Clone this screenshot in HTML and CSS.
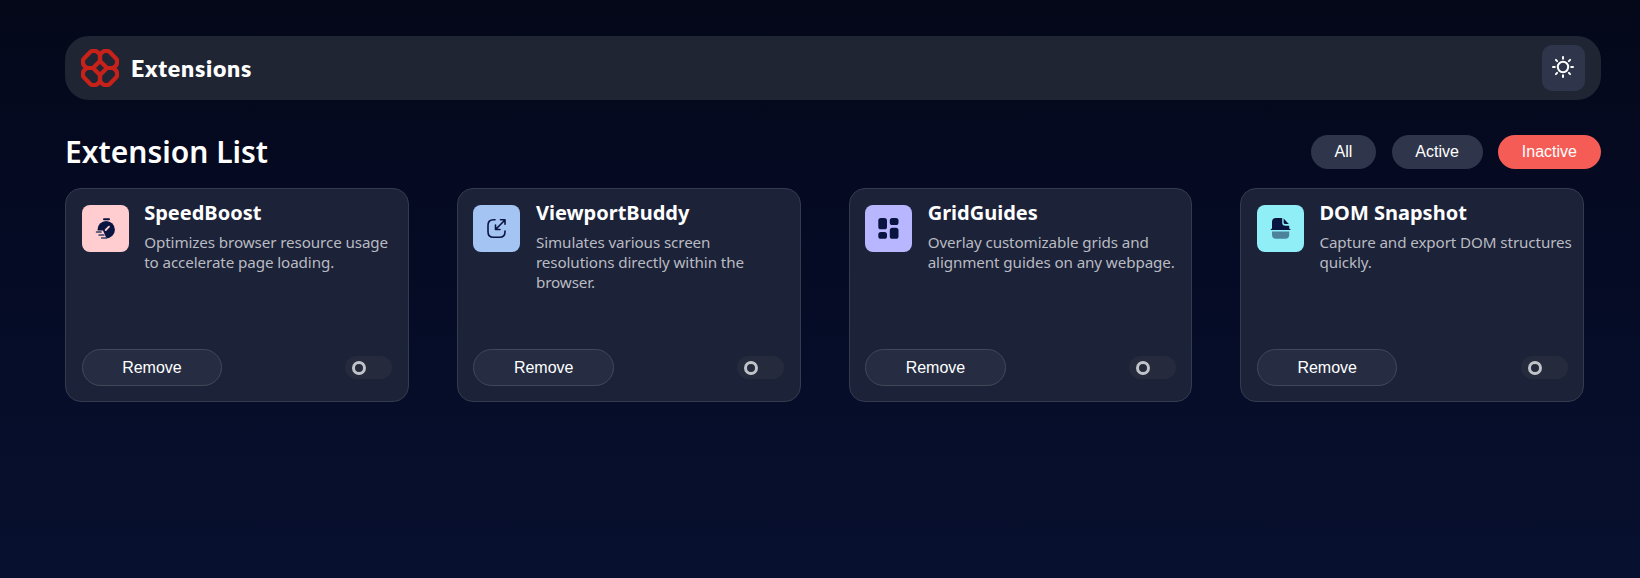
FILE: index.html
```
<!DOCTYPE html>
<html lang="en">
<head>
<meta charset="utf-8">
<title>Extensions</title>
<link rel="stylesheet" href="styles.css">
</head>
<body>
<main class="page">
  <header class="topbar">
    <div class="brand">
      <svg class="brand-mark" viewBox="0 0 38 38" fill="none" stroke="#c7221a" stroke-width="4.200" stroke-linejoin="round">
        <path id="petal" d="M2 11.500Q2 10.500 2.800 9.700L9.300 3Q10.300 2 11.700 2H14Q15.400 2 16.400 3L18 4.600Q19 5.600 19 7V12L12 19H7Q5.600 19 4.600 18L3 16.400Q2 15.400 2 14Z"/>
        <use href="#petal" transform="matrix(-1 0 0 1 38 0)"/>
        <use href="#petal" transform="matrix(1 0 0 -1 0 38)"/>
        <use href="#petal" transform="matrix(-1 0 0 -1 38 38)"/>
      </svg>
      <span class="brand-name">Extensions</span>
    </div>
    <button class="theme">
      <svg width="22" height="22" viewBox="0 0 22 22" fill="none" stroke="#fff" stroke-width="2" stroke-linecap="round"><circle cx="11" cy="11" r="5.200"/><path d="M11 1v1.800M11 19.200v1.800M1 11h1.800M19.200 11h1.800M3.900 3.900l1.200 1.200M16.900 16.900l1.200 1.200M18.100 3.900l-1.200 1.200M5.100 16.900l-1.200 1.200"/></svg>
    </button>
  </header>
  <div class="heading">
    <h1>Extension List</h1>
    <nav class="filters">
      <button class="filter">All</button>
      <button class="filter">Active</button>
      <button class="filter selected">Inactive</button>
    </nav>
  </div>
  <section class="grid">
    <article class="card">
      <div class="info">
        <div class="icon pink"><svg width="47" height="47" viewBox="0 0 47 47" fill="none"><circle cx="24.200" cy="24.700" r="8.700" fill="#091540"/><path d="M22 14.300h5" stroke="#091540" stroke-width="2" stroke-linecap="round"/><path d="M23.700 25l3.300-3.300" stroke="#ffcdd0" stroke-width="1.800" stroke-linecap="round"/><path d="M13 25.500h8l4 9-8 1-4-5z" fill="#ffcdd0"/><path d="M14.600 27h4.400M17.200 30h4.600M19.700 33h4.600" stroke="#353f61" stroke-width="1.700" stroke-linecap="round"/></svg></div>
        <div><h2>SpeedBoost</h2><p>Optimizes browser resource usage to accelerate page loading.</p></div>
      </div>
      <div class="actions"><button class="remove">Remove</button><span class="switch"></span></div>
    </article>
    <article class="card">
      <div class="info">
        <div class="icon blue"><svg width="47" height="47" viewBox="0 0 47 47" fill="none" stroke="#091540" stroke-width="1.600" stroke-linecap="round" stroke-linejoin="round"><path d="M22 14.800h-1.500q-5.500 0-5.500 5.500v6.500q0 5.500 5.500 5.500h6q5.500 0 5.500-5.500V26M32 15L23 24M27.500 14.800H32v4.500M22.500 20v4.500H27"/></svg></div>
        <div><h2>ViewportBuddy</h2><p>Simulates various screen resolutions directly within the browser.</p></div>
      </div>
      <div class="actions"><button class="remove">Remove</button><span class="switch"></span></div>
    </article>
    <article class="card">
      <div class="info">
        <div class="icon violet"><svg width="47" height="47" viewBox="0 0 47 47" fill="#091540"><rect x="13.300" y="13" width="8.700" height="11.300" rx="2.600"/><rect x="24.800" y="13" width="8.700" height="7" rx="2.600"/><rect x="13.300" y="27" width="8.700" height="6.800" rx="2.600"/><rect x="24.800" y="22.800" width="8.700" height="11" rx="2.600"/></svg></div>
        <div><h2>GridGuides</h2><p>Overlay customizable grids and alignment guides on any webpage.</p></div>
      </div>
      <div class="actions"><button class="remove">Remove</button><span class="switch"></span></div>
    </article>
    <article class="card">
      <div class="info">
        <div class="icon cyan"><svg width="47" height="47" viewBox="0 0 47 47" fill="#091540"><path d="M19 13h6.200v4.500q0 3.200 3.200 3.200h3.800v3.100h.7a.6.600 0 0 1 0 1.200H14.300a.6.600 0 0 1 0-1.200h.7V17q0-4 4-4z"/><path d="M26.600 13.500l5.200 5.600h-3.300q-1.900 0-1.900-1.900z"/><path opacity=".5" d="M15 26.500h17.200v3.300q0 4-4 4H19q-4 0-4-4z"/></svg></div>
        <div><h2>DOM Snapshot</h2><p>Capture and export DOM structures quickly.</p></div>
      </div>
      <div class="actions"><button class="remove">Remove</button><span class="switch"></span></div>
    </article>
  </section>
</main>
</body>
</html>
```
FILE: styles.css
```
*, *::before { box-sizing: border-box; }
body {
  margin: 0;
  min-height: 578px;
  background: linear-gradient(180deg, #040819 0, #050a22 180px, #07102f 578px);
  color: #fff;
  font-family: "Noto Sans", sans-serif;
}
button {
  border: 0;
  padding: 0;
  color: #fff;
  font: 16px "Liberation Sans", Arial, sans-serif;
}
.page { padding: 36px 39px 0 65px; }
.topbar {
  display: flex;
  align-items: center;
  justify-content: space-between;
  height: 64px;
  padding: 0 16px;
  border-radius: 24px;
  background: #202534;
}
.brand { display: flex; align-items: center; gap: 12px; }
.brand-mark { width: 38px; height: 38px; }
.brand-name { font: 800 23px "Lato", sans-serif; letter-spacing: 0.8px; }
.theme {
  display: flex;
  align-items: center;
  justify-content: center;
  width: 43px;
  height: 46px;
  padding-right: 1px;
  padding-bottom: 2px;
  border-radius: 10px;
  background: #2f364b;
}
.heading {
  display: flex;
  align-items: center;
  justify-content: space-between;
  height: 34px;
  margin-top: 35px;
}
h1 { margin: 0; font-size: 30px; font-weight: 600; line-height: 34px; }
.filters { display: flex; gap: 15.5px; }
.filter { height: 34px; padding: 0 24px 0 23.5px; border-radius: 17px; background: #2f364b; }
.selected { background: #f55c56; }
.grid {
  display: grid;
  grid-template-columns: repeat(4, 343.75px);
  gap: 48px;
  margin-top: 19px;
}
.card {
  display: flex;
  flex-direction: column;
  justify-content: space-between;
  height: 214px;
  padding: 16px 15.500px 15px 15.700px;
  border: 1px solid #353b4e;
  border-radius: 16px;
  background: #1c2238;
}
.info { display: flex; gap: 15.500px; margin-right: -6px; }
.icon { flex: none; width: 47px; height: 47px; border-radius: 8px; }
.icon svg { display: block; }
.pink { background: #ffcdd0; }
.blue { background: #a4c4f4; }
.violet { background: #b8b6ff; }
.cyan { background: #90eef6; }
h2 { margin: -6px 0 5px; font-size: 20px; font-weight: 700; line-height: 28px; }
p { margin: 0; color: #b9bbc2; font-size: 15.2px; line-height: 20px; letter-spacing: -0.1px; }
.actions { display: flex; align-items: center; justify-content: space-between; }
.remove {
  width: 140.500px;
  height: 37px;
  border: 1px solid #414859;
  border-radius: 19px;
  background: #262d42;
}
.switch {
  display: flex;
  align-items: center;
  width: 47px;
  height: 23px;
  padding-left: 7px;
  border-radius: 12px;
  background: #252b3d;
}
.switch::before {
  content: "";
  width: 14px;
  height: 14px;
  border: 3.500px solid #c0c3c8;
  border-radius: 50%;
}
```
